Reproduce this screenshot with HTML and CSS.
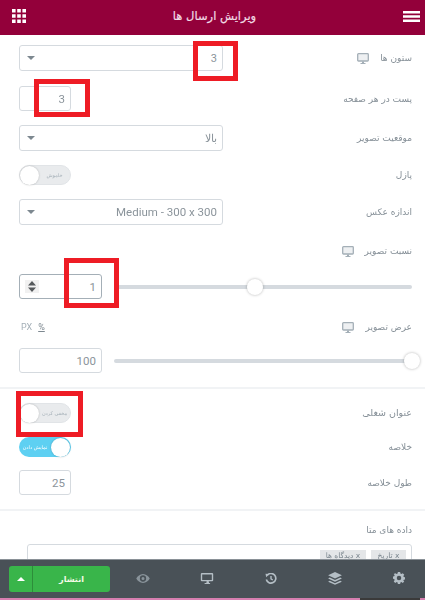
FILE: index.html
```html
<!DOCTYPE html>
<html lang="fa" dir="rtl">
<head>
<meta charset="utf-8">
<title>ویرایش ارسال ها</title>
<link rel="stylesheet" href="styles.css">
</head>
<body>
<div class="page">
  <header class="topbar">
    <svg class="hamburger" width="17" height="11" viewBox="0 0 17 11"><path d="M0 0h17v2.4H0zM0 4.3h17v2.4H0zM0 8.6h17V11H0z" fill="#fff"/></svg>
    <h1 class="title">ویرایش ارسال ها</h1>
    <svg class="apps" width="14" height="14" viewBox="0 0 14 14"><path d="M0 0h3.6v3.6H0zM5.2 0h3.6v3.6H5.2zM10.4 0H14v3.6h-3.6zM0 5.2h3.6v3.6H0zM5.2 5.2h3.6v3.6H5.2zM10.4 5.2H14v3.6h-3.6zM0 10.4h3.6V14H0zM5.2 10.4h3.6V14H5.2zM10.4 10.4H14V14h-3.6z" fill="#fff"/></svg>
  </header>

  <main class="panel">
    <section class="section first">
      <div class="row r1">
        <div class="label">ستون ها <svg class="mon" width="12" height="11" viewBox="0 0 12 11"><rect x=".7" y=".7" width="10.600" height="7.300" rx=".8" fill="#eef0f2" stroke="#a4afb7" stroke-width="1.300"/><path d="M5 8.500h2V10h1.500v1h-5v-1H5z" fill="#a4afb7"/></svg></div>
        <div class="select">3<span class="caret"></span></div>
      </div>
      <div class="row r2">
        <div class="label">پست در هر صفحه</div>
        <div class="num small">3</div>
      </div>
      <div class="row r3">
        <div class="label">موقعیت تصویر</div>
        <div class="select">بالا<span class="caret"></span></div>
      </div>
      <div class="row r4">
        <div class="label">پازل</div>
        <div class="toggle off"><span class="tlabel">خاموش</span><span class="thumb"></span></div>
      </div>
      <div class="row r5">
        <div class="label">اندازه عکس</div>
        <div class="select strong"><bdi>Medium - 300 x 300</bdi><span class="caret"></span></div>
      </div>
      <div class="row r6">
        <div class="label">نسبت تصویر <svg class="mon" width="12" height="11" viewBox="0 0 12 11"><rect x=".7" y=".7" width="10.600" height="7.300" rx=".8" fill="#eef0f2" stroke="#a4afb7" stroke-width="1.300"/><path d="M5 8.500h2V10h1.500v1h-5v-1H5z" fill="#a4afb7"/></svg></div>
      </div>
      <div class="row r7">
        <div class="slider s1"><span class="thumb"></span></div>
        <div class="num wide focus">1
          <span class="spin"><svg width="8" height="11" viewBox="0 0 8 11"><path d="M4 0l4 4.500H0zM4 11L0 6.500h8z" fill="#55595c"/></svg></span>
        </div>
      </div>
      <div class="row r8">
        <div class="label">عرض تصویر <svg class="mon" width="12" height="11" viewBox="0 0 12 11"><rect x=".7" y=".7" width="10.600" height="7.300" rx=".8" fill="#eef0f2" stroke="#a4afb7" stroke-width="1.300"/><path d="M5 8.500h2V10h1.500v1h-5v-1H5z" fill="#a4afb7"/></svg></div>
        <div class="units"><span class="pct">%</span><span>PX</span></div>
      </div>
      <div class="row r9">
        <div class="slider s2"><span class="thumb"></span></div>
        <div class="num wide strong">100</div>
      </div>
    </section>

    <section class="section">
      <div class="row r10">
        <div class="label big">عنوان شغلی</div>
        <div class="toggle off"><span class="tlabel">مخفی کردن</span><span class="thumb"></span></div>
      </div>
      <div class="row r11">
        <div class="label">خلاصه</div>
        <div class="toggle on"><span class="thumb"></span><span class="tlabel">نمایش دادن</span></div>
      </div>
      <div class="row r12">
        <div class="label">طول خلاصه</div>
        <div class="num small strong">25</div>
      </div>
    </section>

    <section class="section meta">
      <div class="label">داده های متا</div>
      <div class="tagbox">
        <span class="tag tag-a"><i>x</i> تاریخ</span>
        <span class="tag tag-b"><i>x</i> دیدگاه ها</span>
      </div>
    </section>
  </main>

  <footer class="toolbar" dir="ltr">
    <div class="publish"><span class="pub-arrow"></span><span class="pub-text">انتشار</span></div>
    <div class="tools">
      <svg class="tool" height="9" viewBox="0 0 18 12"><path fill-rule="evenodd" d="M9 0c4 0 7.300 3 9 6-1.700 3-5 6-9 6S1.700 9 0 6c1.700-3 5-6 9-6zm0 1.800a4.200 4.200 0 1 0 0 8.400 4.200 4.200 0 0 0 0-8.400zM9 4a2 2 0 1 1 0 4 2 2 0 0 1 0-4z" fill="#8a949b"/></svg>
      <svg class="tool" height="11" viewBox="0 0 18 16"><path fill-rule="evenodd" d="M1.500 0h15A1.500 1.500 0 0 1 18 1.500v9a1.500 1.500 0 0 1-1.500 1.500h-5l.5 2.500h1.500V16h-8v-1.500H8l.5-2.500h-7A1.500 1.500 0 0 1 0 10.500v-9A1.500 1.500 0 0 1 1.500 0zM2 2v8h14V2z" fill="#b4bec5"/></svg>
      <svg class="tool" height="11" viewBox="0 0 16 16"><path d="M2.600 3.200A7 7 0 1 1 1.200 9.500" fill="none" stroke="#b4bec5" stroke-width="2.400"/><path d="M0 1l5.500.6L1 6z" fill="#b4bec5"/><path d="M8 4.500V8.400l2.600 1.800" fill="none" stroke="#b4bec5" stroke-width="2"/></svg>
      <svg class="tool" height="13" viewBox="0 0 18 17"><path d="M9 0l9 4.200-9 4.200L0 4.200z" fill="#b4bec5"/><path d="M2.200 7.300L9 10.500l6.800-3.200L18 8.400l-9 4.200-9-4.200z" fill="#b4bec5"/><path d="M2.200 11.500L9 14.700l6.800-3.200L18 12.600 9 16.800 0 12.600z" fill="#b4bec5"/></svg>
      <svg class="tool" height="12" viewBox="0 0 16 16"><path fill-rule="evenodd" d="M6.500 0h3l.4 2.100 1.300.6L13 1.500 15 3.500l-1.200 1.800.6 1.300 1.600.4v3l-1.600.4-.6 1.300L15 12.500 13 14.500l-1.800-1.200-1.300.6-.4 2.100h-3l-.4-2.100-1.300-.6L3 14.500 1 12.500l1.200-1.800-.6-1.300L0 9V6l1.600-.4.600-1.300L1 2.500 3 1.500l1.800 1.200 1.300-.6zM8 5a3 3 0 1 0 0 6 3 3 0 0 0 0-6z" fill="#b4bec5"/></svg>
    </div>
  </footer>
  <div class="strip" dir="ltr"><span class="strip-dark"></span></div>

  <span class="mark m1"></span>
  <span class="mark m2"></span>
  <span class="mark m3"></span>
  <span class="mark m4"></span>
</div>
</body>
</html>
```
FILE: styles.css
```css
* { box-sizing: border-box; }
html, body { margin: 0; padding: 0; }
body { background: #fff; font-family: "DejaVu Sans", "Liberation Sans", sans-serif; }

.page { position: relative; width: 425px; height: 600px; overflow: hidden; display: flex; flex-direction: column; filter: blur(.3px); }

.topbar { flex: none; height: 35px; background: #93003a; display: flex; align-items: center; justify-content: space-between; padding: 0 5px 0 12px; }
.hamburger { margin-top: -2px; }
.apps { margin-top: -3px; }
.title { margin: -3px 0 0 0; font-size: 11.500px; font-weight: 400; color: #f1dbe4; -webkit-text-stroke: 0.2px #f1dbe4; }

.panel { flex: 1; min-height: 0; overflow: hidden; }
.section { padding: 14px 13px 14px 19px; border-bottom: 2px solid #f1f3f5; }
.section.first { padding-top: 10px; padding-bottom: 14px; }
.section.meta { border-bottom: 0; padding-top: 11px; }

.row { display: flex; align-items: center; justify-content: space-between; }
.r1 { height: 26px; }
.r2 { height: 25px; margin-top: 15px; }
.r3 { height: 26px; margin-top: 14px; }
.r4 { height: 20px; margin-top: 14px; }
.r5 { height: 26px; margin-top: 14px; }
.r6 { height: 16px; margin-top: 18px; }
.r7 { height: 25px; margin-top: 15px; }
.r8 { height: 16px; margin-top: 20px; }
.r9 { height: 25px; margin-top: 13px; margin-right: -2px; }
.r10 { height: 20px; }
.r11 { height: 20px; margin-top: 14px; }
.r12 { height: 25px; margin-top: 13px; }

.label { font-size: 9px; color: #858f97; display: flex; align-items: center; line-height: 16px; white-space: nowrap; }
.label.big { font-size: 9.500px; }
.mon { margin-right: 11px; }

.select, .num { font-family: Roboto, sans-serif; font-size: 11.500px; color: #8b949b; border: 1px solid #d5dadf; border-radius: 3px; background: #fff; display: flex; align-items: center; position: relative; }
.select { width: 204px; height: 100%; padding: 0 5px; justify-content: space-between; font-size: 11px; }
.select.strong { font-size: 11.500px; }
.caret { width: 0; height: 0; border-left: 4px solid transparent; border-right: 4px solid transparent; border-top: 4px solid #7d8890; margin-left: 2px; }

.num { height: 100%; padding: 0 5px; }
.num.small { width: 52px; }
.num.wide { width: 83px; }
.num.focus { border-color: #a4afb7; }
.spin { position: absolute; left: 5px; top: 5px; width: 14px; height: 13px; background: #f1f1f1; display: flex; align-items: center; justify-content: center; }

.toggle { width: 52px; height: 20px; border-radius: 10px; display: flex; align-items: center; font-size: 5px; }
.toggle .thumb { flex: none; width: 19px; height: 19px; border-radius: 50%; background: #fff; box-shadow: 0 0 2px rgba(0,0,0,.25); }
.toggle.off { background: #e9ebed; color: #a4afb7; border: 1px solid #e1e4e7; }
.toggle.on { background: #5ed0f2; color: #fff; padding-right: 1px; }
.tlabel { flex: 1; text-align: center; white-space: nowrap; }

.slider { position: relative; height: 4px; background: #d5dadf; border-radius: 2px; }
.slider .thumb { position: absolute; top: -6px; width: 16px; height: 16px; border-radius: 50%; background: #fff; box-shadow: 0 0 3px rgba(0,0,0,.3); }
.s1 { width: 298px; }
.s1 .thumb { right: 149px; }
.s2 { width: 300px; }
.s2 .thumb { right: -6px; }

.units { display: flex; align-items: center; gap: 6px; font-family: Roboto, sans-serif; font-size: 9px; color: #a4afb7; padding-left: 2px; }
.pct { text-decoration: underline; color: #7d8890; }

.tagbox { margin-top: 6px; margin-left: 8px; height: 40px; border: 1px solid #d5dadf; border-radius: 3px; padding: 5px 5px; display: flex; gap: 5px; }
.tag { height: 18px; background: #e4e6e8; color: #7d8890; font-size: 7.500px; line-height: 11px; text-align: center; white-space: nowrap; }
.tag-a { width: 35px; }
.tag-b { width: 46px; }
.tag i { font-style: normal; }

.toolbar { flex: none; height: 39px; background: #495157; border-top: 1px solid #8a9197; display: flex; align-items: center; padding: 0 17px 0 9px; }
.publish { width: 101px; height: 26px; background: #39b54a; border-radius: 3px; display: flex; align-items: center; color: #f4fbe6; font-size: 8px; font-weight: 700; }
.pub-arrow { flex: none; width: 24px; height: 100%; border-right: 1px solid #2d8d3a; display: flex; align-items: center; justify-content: center; }
.pub-arrow::after { content: ""; border-left: 4px solid transparent; border-right: 4px solid transparent; border-bottom: 4px solid #fff; }
.pub-text { flex: 1; text-align: center; }
.tools { flex: 1; margin: -2px 0 0 24px; display: flex; align-items: center; justify-content: space-between; }
.tool { width: 18px; }

.strip { flex: none; height: 2px; background: #d77fb0; display: flex; justify-content: flex-end; }
.strip-dark { width: 60px; background: #3a3a3a; margin-right: 5px; }

.mark { position: absolute; border: 5px solid #ee1c25; }
.m1 { left: 193px; top: 41px; width: 45px; height: 40px; }
.m2 { left: 34px; top: 79px; width: 56px; height: 38px; }
.m3 { left: 64px; top: 258px; width: 55px; height: 50px; }
.m4 { left: 16px; top: 391px; width: 67px; height: 46px; }
```
